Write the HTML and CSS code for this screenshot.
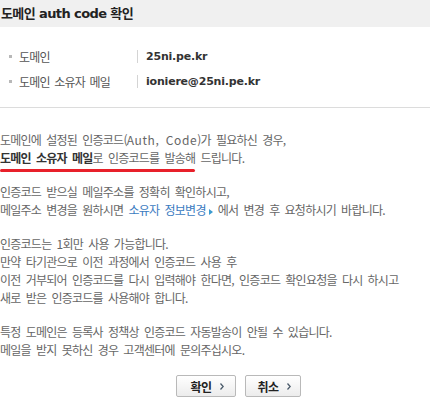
FILE: index.html
```html
<!DOCTYPE html>
<html lang="ko">
<head>
<meta charset="utf-8">
<link rel="stylesheet" href="styles.css">
</head>
<body>
<div class="popup">
  <h1 class="title">도메인 auth code 확인</h1>
  <ul class="info">
    <li class="row"><span class="label">도메인</span><span class="value">25ni.pe.kr</span></li>
    <li class="row"><span class="label">도메인 소유자 메일</span><span class="value">ioniere@25ni.pe.kr</span></li>
  </ul>
  <div class="content">
    <p class="para">도메인에 설정된 인증코드(<span class="latin">Auth, Code</span>)가 필요하신 경우,<br><span class="mark"><strong>도메인 소유자 메일</strong>로 인증코드를 발송해</span> 드립니다.</p>
    <p class="para">인증코드 받으실 메일주소를 정확히 확인하시고,<br>메일주소 변경을 원하시면 <a class="link" href="#">소유자 정보변경<span class="tri"></span></a> 에서 변경 후 요청하시기 바랍니다.</p>
    <p class="para">인증코드는 1회만 사용 가능합니다.<br>만약 타기관으로 이전 과정에서 인증코드 사용 후<br>이전 거부되어 인증코드를 다시 입력해야 한다면, 인증코드 확인요청을 다시 하시고<br>새로 받은 인증코드를 사용해야 합니다.</p>
    <p class="para">특정 도메인은 등록사 정책상 인증코드 자동발송이 안될 수 있습니다.<br>메일을 받지 못하신 경우 고객센터에 문의주십시오.</p>
  </div>
  <div class="buttons">
    <button class="btn btn-ok" type="button">확인<svg class="chev" width="4" height="7" viewBox="0 0 4 7"><path d="M0.5 0.5 L3.2 3.5 L0.5 6.5" fill="none" stroke="#4a5a6a" stroke-width="1.3"/></svg></button>
    <button class="btn btn-cancel" type="button">취소<svg class="chev" width="4" height="7" viewBox="0 0 4 7"><path d="M0.5 0.5 L3.2 3.5 L0.5 6.5" fill="none" stroke="#4a5a6a" stroke-width="1.3"/></svg></button>
  </div>
</div>
</body>
</html>
```

FILE: styles.css
```css
html, body {
  margin: 0;
  padding: 0;
  background: #fff;
}

.popup {
  width: 430px;
  font-family: "Noto Sans CJK KR", sans-serif;
  font-size: 12px;
  color: #666;
}

.title {
  margin: 0;
  height: 27px;
  line-height: 27px;
  padding-left: 1px;
  background: #f0f0f0;
  font-family: "DejaVu Sans", "Noto Sans CJK KR", sans-serif;
  font-size: 13px;
  font-weight: bold;
  letter-spacing: -0.6px;
  color: #222;
}

.info {
  list-style: none;
  margin: 0;
  padding: 17px 0 13px 0;
  border-bottom: 1px solid #dcdcdc;
}

.row {
  display: flex;
  align-items: center;
  height: 25px;
}

.label {
  position: relative;
  width: 118px;
  padding-left: 19px;
  color: #555;
  letter-spacing: -0.8px;
  word-spacing: 2px;
  border-right: 1px solid #d4d4d4;
  line-height: 13px;
}

.label::before {
  content: "";
  position: absolute;
  left: 9px;
  top: 5px;
  width: 3px;
  height: 3px;
  background: #b8b8b8;
}

.value {
  padding-left: 8px;
  font-family: "DejaVu Sans", sans-serif;
  font-size: 11px;
  font-weight: bold;
  color: #333;
  letter-spacing: -0.2px;
}

.content {
  padding-top: 23px;
}

.para {
  margin: 0 0 16px 0;
  line-height: 18px;
  letter-spacing: -0.75px;
  word-spacing: 2.5px;
  white-space: nowrap;
}

.latin {
  letter-spacing: 0.6px;
}

.para strong {
  color: #333;
  font-weight: bold;
}

.mark {
  position: relative;
}

.mark::after {
  content: "";
  position: absolute;
  left: 0;
  right: 0;
  bottom: -6px;
  height: 3px;
  border-radius: 2px;
  background: #e8202a;
}

.link {
  color: #3b7bbf;
  text-decoration: none;
}

.tri {
  display: inline-block;
  width: 0;
  height: 0;
  margin-left: 3px;
  border-left: 4px solid #3b9bd0;
  border-top: 3.5px solid transparent;
  border-bottom: 3.5px solid transparent;
  vertical-align: 0;
}

.buttons {
  display: flex;
  gap: 9px;
  padding-left: 176px;
  margin-top: 12px;
}

.btn {
  display: flex;
  align-items: center;
  justify-content: center;
  gap: 8px;
  height: 22px;
  padding: 0 0 0 2px;
  border: 1px solid #b9b9b9;
  border-radius: 2px;
  background: linear-gradient(#ffffff, #ececec);
  font-family: "Noto Sans CJK KR", sans-serif;
  font-size: 12px;
  font-weight: bold;
  color: #222;
  letter-spacing: -0.5px;
}

.btn-ok {
  width: 60px;
}

.btn-cancel {
  width: 56px;
}
```
